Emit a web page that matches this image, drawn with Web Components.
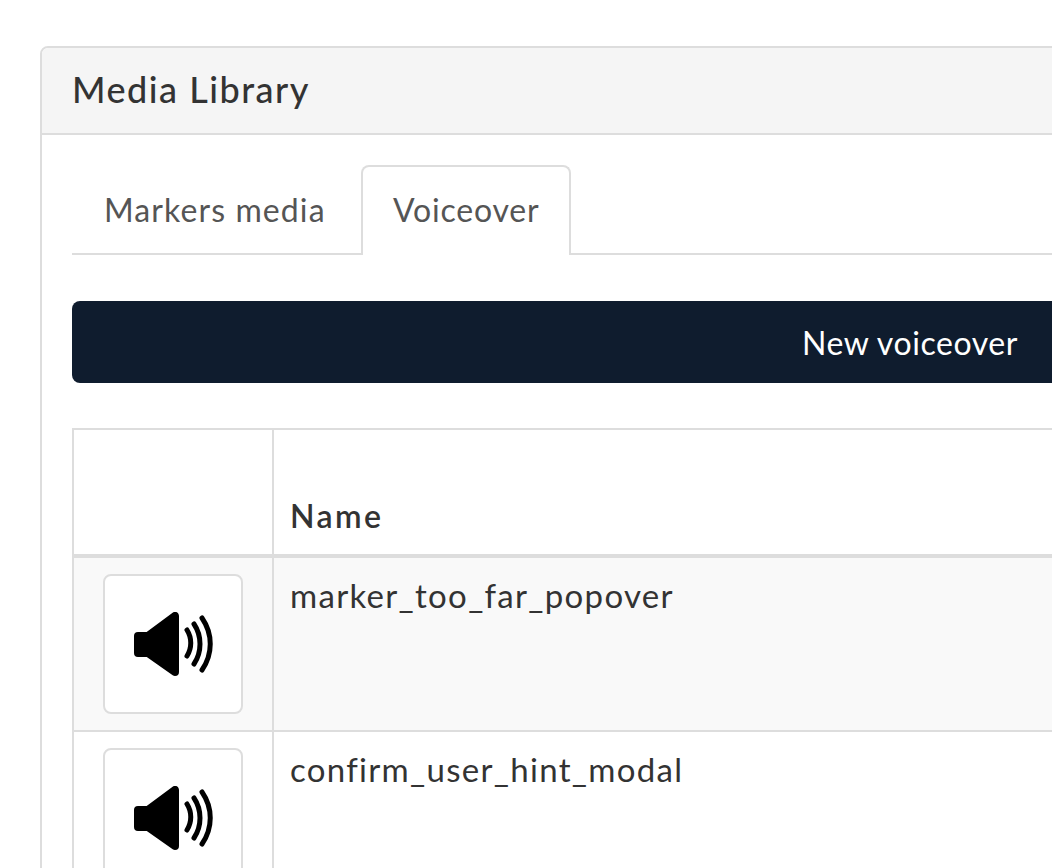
<!DOCTYPE html>
<html>
<head>
<meta charset="utf-8">
<title>Media Library</title>
<style>
  html, body {
    margin: 0;
    height: 100%;
    overflow: hidden;
    background: #fff;
  }
  body {
    padding: 46px 0 0 40px;
    box-sizing: border-box;
    font-family: Lato, "Open Sans", sans-serif;
    color: #333;
  }
</style>
</head>
<body>
<media-panel heading="Media Library">
  <media-tabs></media-tabs>
  <action-button>New voiceover</action-button>
  <media-table>
    <media-row name="marker_too_far_popover" striped></media-row>
    <media-row name="confirm_user_hint_modal"></media-row>
  </media-table>
</media-panel>

<script>
  /**
   * Panel with a grey heading.
   */
  class MediaPanel extends HTMLElement {
    constructor () {
      super()
      this.attachShadow({ mode: 'open' }).innerHTML = `
        <style>
          :host {
            display: block;
            width: 1740px;
            height: 1000px;
            border: 2px solid #ddd;
            border-radius: 8px;
            box-sizing: border-box;
          }
          header {
            height: 87px;
            box-sizing: border-box;
            padding: 19px 30px 0 30px;
            background: #f5f5f5;
            border-bottom: 2px solid #ddd;
            border-radius: 6px 6px 0 0;
            font-size: 36px;
            line-height: 44px;
            font-weight: 500;
            letter-spacing: 1.5px;
          }
          .body {
            padding: 30px;
          }
        </style>
        <header></header>
        <div class="body"><slot></slot></div>
      `
      this.shadowRoot.querySelector('header').textContent = this.getAttribute('heading')
    }
  }
  customElements.define('media-panel', MediaPanel)

  /**
   * The two tabs above the content.
   */
  class MediaTabs extends HTMLElement {
    constructor () {
      super()
      this.attachShadow({ mode: 'open' }).innerHTML = `
        <style>
          :host {
            display: flex;
            height: 90px;
            box-sizing: border-box;
            border-bottom: 2px solid #ddd;
            margin-bottom: 46px;
            font-size: 32px;
            line-height: 44px;
            color: #555;
          }
          div {
            box-sizing: border-box;
            height: 90px;
            padding: 21px 30px 0 30px;
            border: 2px solid transparent;
            border-bottom: 0;
            border-radius: 8px 8px 0 0;
            white-space: nowrap;
          }
          .first {
            width: 289px;
            letter-spacing: 1.1px;
          }
          .active {
            width: 210px;
            background: #fff;
            border-color: #ddd;
            letter-spacing: 0.8px;
          }
        </style>
        <div class="first">Markers media</div>
        <div class="active">Voiceover</div>
      `
    }
  }
  customElements.define('media-tabs', MediaTabs)

  /**
   * Full width dark button.
   */
  class ActionButton extends HTMLElement {
    constructor () {
      super()
      this.attachShadow({ mode: 'open' }).innerHTML = `
        <style>
          :host {
            display: flex;
            align-items: center;
            justify-content: center;
            height: 82px;
            margin-bottom: 45px;
            background: #0f1c2e;
            border-radius: 8px;
            color: #fff;
            font-size: 32px;
            letter-spacing: 0.55px;
          }
        </style>
        <slot></slot>
      `
    }
  }
  customElements.define('action-button', ActionButton)

  /**
   * Table with its header row, rows are slotted.
   */
  class MediaTable extends HTMLElement {
    constructor () {
      super()
      this.attachShadow({ mode: 'open' }).innerHTML = `
        <style>
          :host {
            display: block;
            border: 2px solid #ddd;
            border-bottom: 0;
          }
          .head {
            display: grid;
            grid-template-columns: 198px 1fr;
            height: 124px;
            border-bottom: 4px solid #ddd;
          }
          .head div:last-child {
            border-left: 2px solid #ddd;
            padding: 64px 16px 0 16px;
            font-size: 32px;
            line-height: 44px;
            font-weight: 600;
            letter-spacing: 2.4px;
          }
        </style>
        <div class="head"><div></div><div>Name</div></div>
        <slot></slot>
      `
    }
  }
  customElements.define('media-table', MediaTable)

  /**
   * One voiceover: speaker thumbnail and its name.
   */
  class MediaRow extends HTMLElement {
    constructor () {
      super()
      this.attachShadow({ mode: 'open' }).innerHTML = `
        <style>
          :host {
            display: grid;
            grid-template-columns: 198px 1fr;
            height: 174px;
            box-sizing: border-box;
            border-bottom: 2px solid #ddd;
            font-size: 33px;
            line-height: 44px;
            letter-spacing: 1.3px;
          }
          :host([striped]) {
            background: #f9f9f9;
          }
          .thumb-cell {
            padding: 16px 0 0 29px;
          }
          .thumb {
            box-sizing: border-box;
            width: 140px;
            height: 140px;
            display: flex;
            align-items: center;
            justify-content: center;
            background: #fff;
            border: 2px solid #ddd;
            border-radius: 8px;
          }
          .name {
            border-left: 2px solid #ddd;
            padding: 15px 16px 0 16px;
          }
          svg {
            display: block;
            width: 80px;
            height: 64px;
          }
        </style>
        <div class="thumb-cell">
          <div class="thumb">
            <svg viewBox="0 0 80 64">
              <path fill="#000" stroke="#000" stroke-width="8" stroke-linejoin="round" d="M5 24H15L42 4V60L15 41H5z"/>
              <g fill="none" stroke="#000" stroke-width="5" stroke-linecap="round">
                <path d="M54 18c5 8 5 18 0 26"/>
                <path d="M61 12c8 12 8 28 0 40"/>
                <path d="M69 6c11 16 11 36 0 52"/>
              </g>
            </svg>
          </div>
        </div>
        <div class="name"></div>
      `
      this.shadowRoot.querySelector('.name').textContent = this.getAttribute('name')
    }
  }
  customElements.define('media-row', MediaRow)
</script>
</body>
</html>
